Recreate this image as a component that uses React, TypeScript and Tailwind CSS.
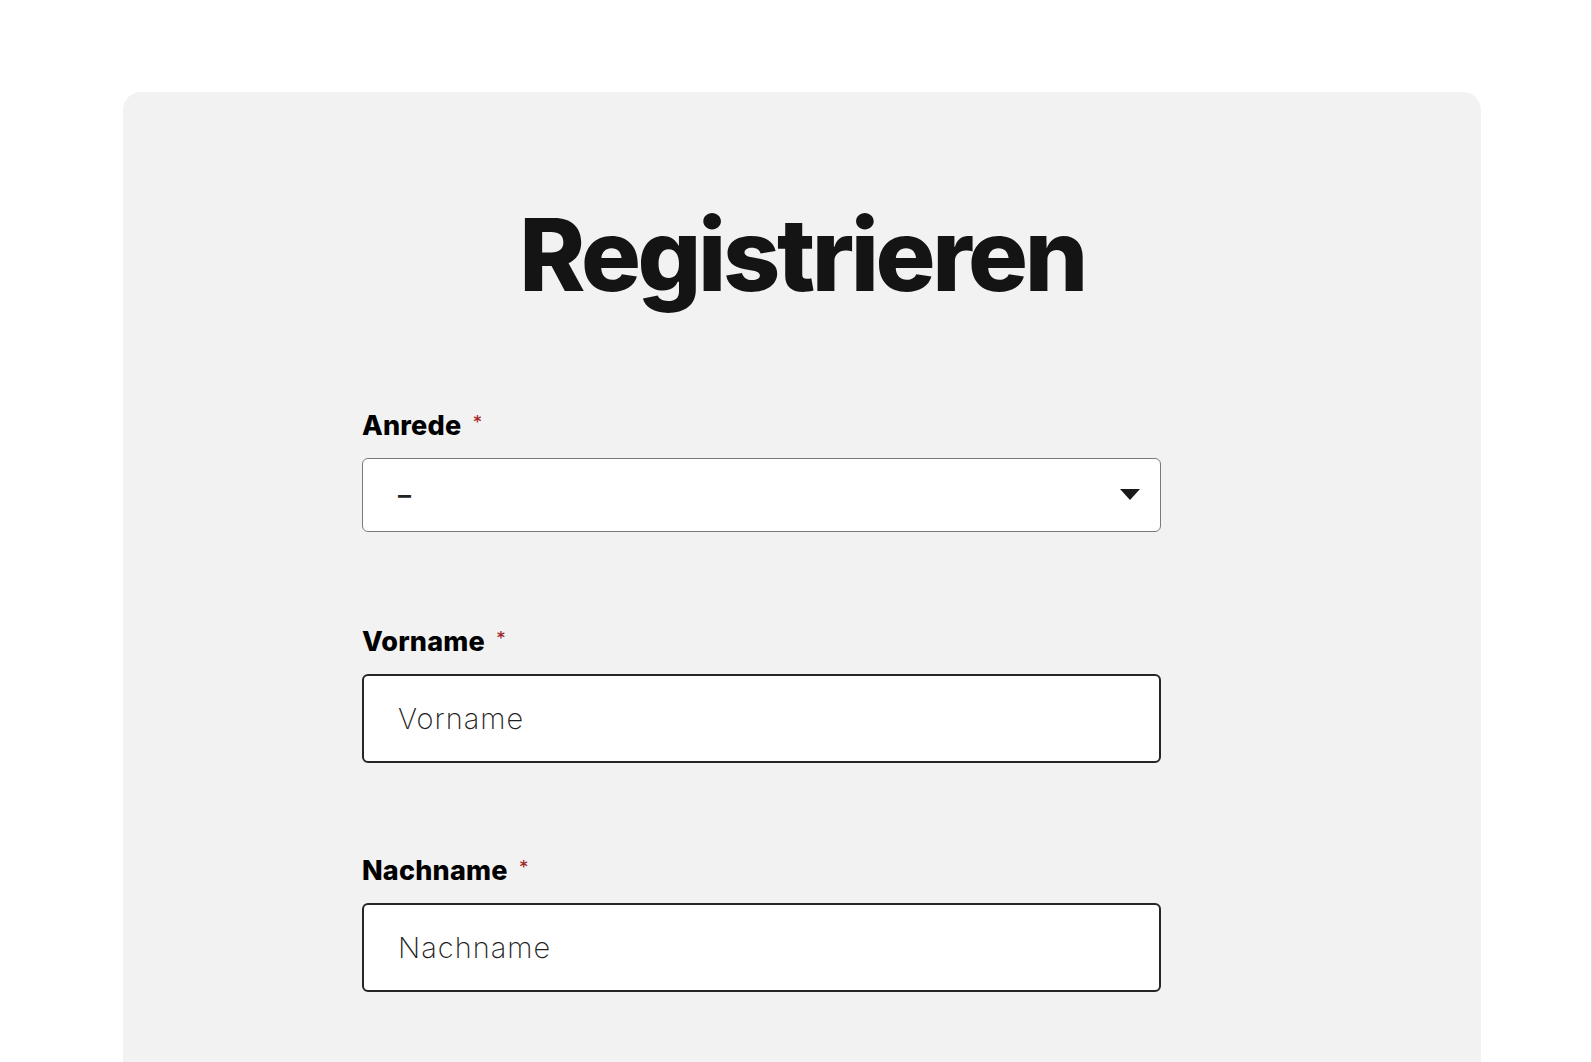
import React from "react";

function Label({ text }: { text: string }) {
  return (
    <div className="flex items-start pt-[2px] mb-[19px] h-[29px]">
      <span
        className="text-[27px] leading-none font-extrabold text-black tracking-[0.2px]"
        style={{ fontFamily: "Inter, 'Liberation Sans', sans-serif" }}
      >
        {text}
      </span>
      <span
        className="ml-[12px] text-[15px] leading-none font-bold text-[#a3262a] mt-[3px]"
        style={{ fontFamily: "'DejaVu Sans', sans-serif" }}
      >
        *
      </span>
    </div>
  );
}

export default function App() {
  return (
    <div className="w-[1592px] h-[1062px] overflow-hidden bg-white flex">
      <div className="flex-1 pt-[92px] pl-[123px]">
        <div className="w-[1358px] h-[1100px] bg-[#f2f2f2] rounded-[18px] pt-[113px]">
          <h1
            className="text-center text-[100px] leading-none font-extrabold text-[#141414] tracking-[-3.4px]"
            style={{ fontFamily: "Inter, 'Liberation Sans', sans-serif" }}
          >
            Registrieren
          </h1>
          <div className="ml-[239px] w-[799px] mt-[105px] flex flex-col">
            <div>
              <Label text="Anrede" />
              <div className="h-[74px] bg-white border-[1.5px] border-[#7a7a7a] rounded-[6px] flex items-center justify-between pl-[35px] pr-[20px]">
                <span
                  className="text-[26px] font-semibold text-[#222] leading-none"
                  style={{ fontFamily: "Inter, 'Liberation Sans', sans-serif" }}
                >
                  –
                </span>
                <svg width="20" height="12" viewBox="0 0 20 12">
                  <path d="M0 0 L20 0 L10 11 Z" fill="#1a1a1a" />
                </svg>
              </div>
            </div>
            <div className="mt-[94px]">
              <Label text="Vorname" />
              <div className="h-[89px] bg-white border-2 border-[#262626] rounded-[6px] flex items-center pl-[34px]">
                <span
                  className="text-[29px] font-extralight text-[#1f1f1f] leading-none tracking-[1px]"
                  style={{ fontFamily: "Inter, 'Liberation Sans', sans-serif" }}
                >
                  Vorname
                </span>
              </div>
            </div>
            <div className="mt-[92px]">
              <Label text="Nachname" />
              <div className="h-[89px] bg-white border-2 border-[#262626] rounded-[6px] flex items-center pl-[34px]">
                <span
                  className="text-[29px] font-extralight text-[#1f1f1f] leading-none tracking-[1px]"
                  style={{ fontFamily: "Inter, 'Liberation Sans', sans-serif" }}
                >
                  Nachname
                </span>
              </div>
            </div>
          </div>
        </div>
      </div>
      <div className="w-[1px] h-full bg-[#dcdcdc]" />
    </div>
  );
}
